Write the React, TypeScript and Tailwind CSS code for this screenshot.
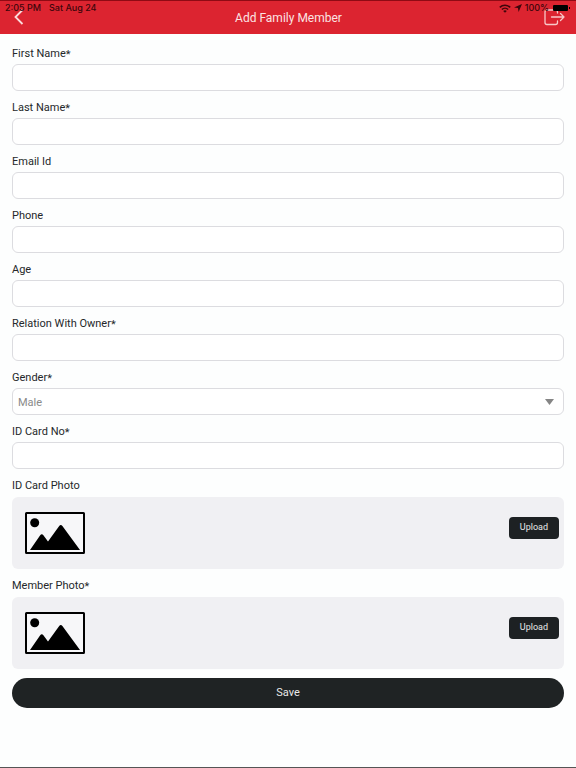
// ============================================
// Add Family Member Screen
// Form with personal details and photo uploads
// ============================================

import { useState } from 'react';
import { clsx } from 'clsx';

interface FieldLabelProps {
  id: string;
  label: string;
  required?: boolean;
}

interface TextField extends FieldLabelProps {
  type: string;
}

const TEXT_FIELDS: TextField[] = [
  { id: 'firstName', label: 'First Name', type: 'text', required: true },
  { id: 'lastName', label: 'Last Name', type: 'text', required: true },
  { id: 'email', label: 'Email Id', type: 'email' },
  { id: 'phone', label: 'Phone', type: 'tel' },
  { id: 'age', label: 'Age', type: 'text' },
  { id: 'relation', label: 'Relation With Owner', type: 'text', required: true },
];

const CONTROL_CLASS =
  'block h-[27px] w-full rounded-md border border-[#dcdce0] bg-white px-[5px] text-[11px] text-[#8a8a8a] outline-none';

function FieldLabel({ id, label, required }: FieldLabelProps) {
  return (
    <label htmlFor={id} className="flex h-[14px] text-[11px] leading-4 text-[#25282a]">
      {label}
      {required && <span className="pt-px">*</span>}
    </label>
  );
}

function StatusBar() {
  return (
    <div className="absolute inset-x-0 top-0 flex h-[15px] items-center justify-between border-t border-[#8f0a14] pr-1.5 pl-[5px] font-['Inter',sans-serif] text-[9px] leading-3 font-medium text-[#3d060b]">
      <div className="flex gap-2">
        <span>2:05 PM</span>
        <span>Sat Aug 24</span>
      </div>
      <div className="flex items-center gap-[3px]">
        <svg viewBox="0 0 12 9" className="h-[9px] w-3" fill="none" stroke="currentColor" strokeWidth="1.6">
          <path d="M0.8 3.4a7.4 7.4 0 0 1 10.4 0" />
          <path d="M2.9 5.5a4.4 4.4 0 0 1 6.2 0" />
          <path d="M6 8.8 4.2 7a2.6 2.6 0 0 1 3.6 0z" fill="currentColor" stroke="none" />
        </svg>
        <svg viewBox="0 0 8 8" className="h-2 w-2" fill="currentColor">
          <path d="M8 0 4.6 8 3.9 4.1 0 3.4z" />
        </svg>
        <span>100%</span>
        <svg viewBox="0 0 18 6" className="h-[6px] w-[18px] text-black" fill="currentColor">
          <rect x="1" width="15" height="6" rx="1" />
          <rect x="17" y="2" width="1" height="2" />
        </svg>
      </div>
    </div>
  );
}

function PhotoPlaceholder() {
  return (
    <svg viewBox="0 0 60 42" className="h-[42px] w-[60px]" aria-hidden="true">
      <rect x="1" y="1" width="58" height="40" rx="0.5" fill="#f7f7f9" stroke="#000" strokeWidth="2" />
      <circle cx="9.7" cy="10.8" r="4.5" />
      <path d="M5 38 15.2 23.2q1.6-2 3.2 0L23 29.6 34.2 14q1.6-2 3.2 0L55 38z" />
    </svg>
  );
}

function PhotoField({ id, label, required }: FieldLabelProps) {
  return (
    <div className="space-y-[5px]">
      <FieldLabel id={id} label={label} required={required} />
      <div className="flex h-[72px] items-center justify-between rounded-md bg-[#f0f0f3] pr-[5px] pl-[13px]">
        <PhotoPlaceholder />
        <button
          id={id}
          type="button"
          className="mb-2.5 h-[22px] rounded-[4px] bg-[#1d2123] px-[11px] text-[9px] text-[#e8e8e8]"
        >
          Upload
        </button>
      </div>
    </div>
  );
}

export default function App() {
  const [gender, setGender] = useState('Male');

  return (
    <div className="flex min-h-screen flex-col border-b border-[#555] bg-[#fdfefe] font-['Roboto',sans-serif]">
      <header className="relative grid h-[34px] grid-cols-[1fr_auto_1fr] items-center bg-[#dc2430] pr-[11px] pl-3">
        <button type="button" aria-label="Back" className="justify-self-start text-[#fbdcdc]">
          <svg viewBox="0 0 14 16" className="h-4 w-[14px]" fill="none" stroke="currentColor" strokeWidth="1.8">
            <path d="M10.5 1 3.5 8l7 7" />
          </svg>
        </button>
        <h1 className="pt-0.5 text-[12px] leading-4 text-[#fbe3e3]">Add Family Member</h1>
        <button type="button" aria-label="Log out" className="justify-self-end text-[#f8c8c8]">
          <svg
            viewBox="0 0 21 18"
            className="h-[18px] w-[21px]"
            fill="none"
            stroke="currentColor"
            strokeWidth="1.3"
            strokeLinecap="round"
            strokeLinejoin="round"
          >
            <path d="M13.500 5V4a2 2 0 0 0-2-2H3a2 2 0 0 0-2 2v10.500a2 2 0 0 0 2 2h8.500a2 2 0 0 0 2-2V13" />
            <path d="M7.500 9H20M16.500 5.500 20 9l-3.500 3.500" />
          </svg>
        </button>
        <StatusBar />
      </header>

      <form className="flex flex-col gap-[9px] px-3 py-3" onSubmit={(e) => e.preventDefault()}>
        {TEXT_FIELDS.map((field) => (
          <div key={field.id} className="space-y-1">
            <FieldLabel id={field.id} label={field.label} required={field.required} />
            <input id={field.id} type={field.type} className={CONTROL_CLASS} />
          </div>
        ))}

        {/* Gender */}
        <div className="space-y-1">
          <FieldLabel id="gender" label="Gender" required />
          <div className="relative">
            <select
              id="gender"
              value={gender}
              onChange={(e) => setGender(e.target.value)}
              className={clsx(CONTROL_CLASS, 'appearance-none pt-[3px]')}
            >
              <option>Male</option>
              <option>Female</option>
            </select>
            <svg
              viewBox="0 0 9 6"
              className="pointer-events-none absolute top-[11px] right-[10px] h-[6px] w-[9px]"
              fill="#858585"
            >
              <path d="M0 0h9L4.500 6z" />
            </svg>
          </div>
        </div>

        <div className="space-y-1">
          <FieldLabel id="idCardNo" label="ID Card No" required />
          <input id="idCardNo" type="text" className={CONTROL_CLASS} />
        </div>

        {/* Photos */}
        <PhotoField id="idCardPhoto" label="ID Card Photo" />
        <PhotoField id="memberPhoto" label="Member Photo" required />

        <button type="submit" className="h-[30px] rounded-full bg-[#1f2324] text-[11px] text-[#e8e8e8]">
          Save
        </button>
      </form>
    </div>
  );
}
